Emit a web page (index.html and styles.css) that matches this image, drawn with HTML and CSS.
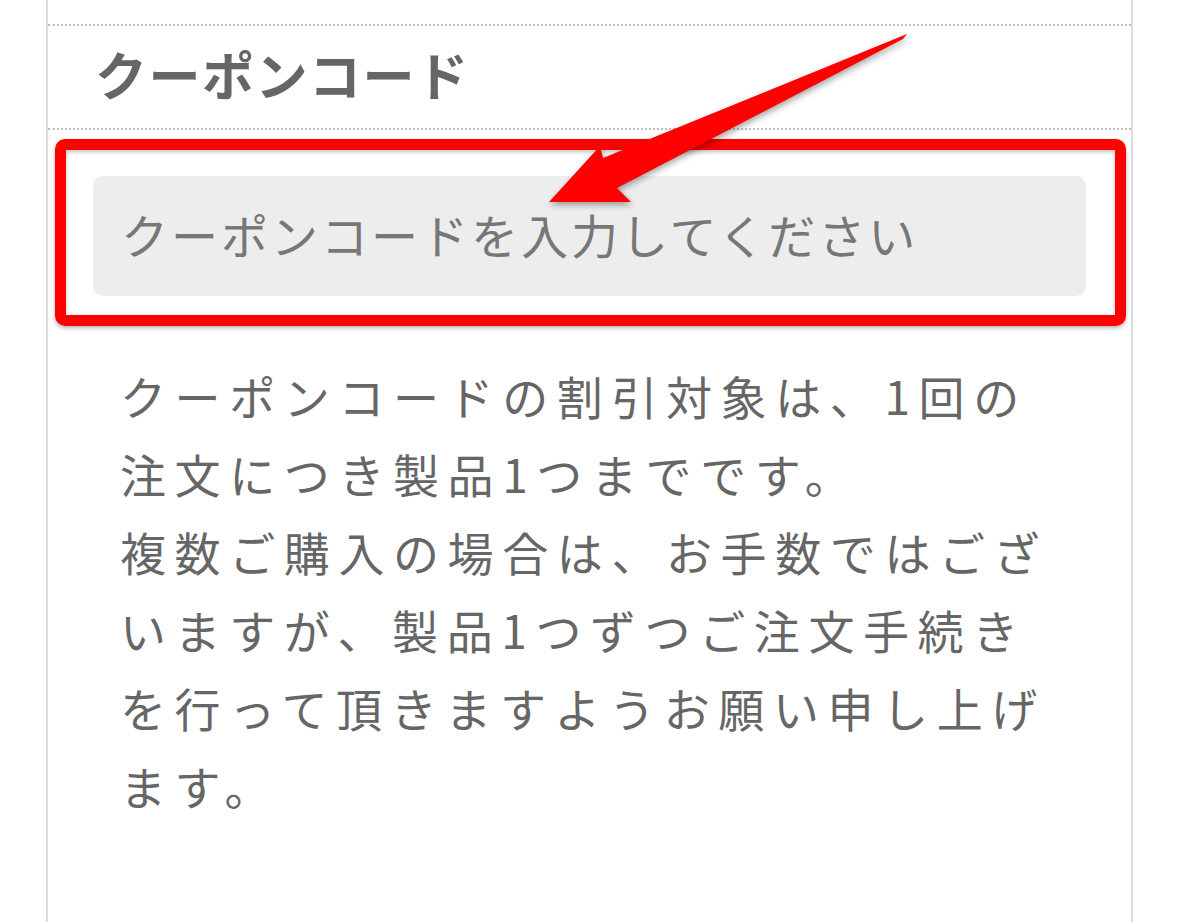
FILE: index.html
```html
<!DOCTYPE html>
<html lang="ja">
<head>
  <meta charset="UTF-8" />
  <meta name="viewport" content="width=device-width, initial-scale=1.0"/>
  <title>クーポンコード</title>
  <link rel="stylesheet" href="styles.css">
</head>
<body>
<div class="panel">
  <h2 class="section-title">クーポンコード</h2>

  <div class="coupon-field">
    <input type="text" class="coupon-input" placeholder="クーポンコードを入力してください" />
    <div class="highlight"></div>
  </div>

  <p class="note">
    クーポンコードの割引対象は、1回の注文につき製品1つまでです。<br/>
    複数ご購入の場合は、お手数ではございますが、製品1つずつご注文手続きを行って頂きますようお願い申し上げます。
  </p>
</div>

<!-- annotation arrow -->
<svg class="arrow" width="1179" height="922" viewBox="0 0 1179 922">
  <polygon points="907,34 603,158 600,146 549,202 631,202 617,188 903,39" fill="#ff0000"/>
</svg>
</body>
</html>
```

FILE: styles.css
```css
body {
  margin: 0;
  background: #fff;
  color: #666;
  font-family: "Noto Sans CJK JP", "Noto Sans", sans-serif;
  position: relative;
}

.panel {
  margin-left: 46px;
  width: 1083px;
  min-height: 898px;
  padding-top: 24px;
  border-left: 2px solid #dcdcdc;
  border-right: 2px solid #dcdcdc;
}

.section-title {
  margin: 0;
  padding-left: 47px;
  height: 102px;
  line-height: 96px;
  font-size: 52px;
  font-weight: bold;
  letter-spacing: 1.5px;
  color: #666;
  border-top: 2px dotted #bdbdbd;
  border-bottom: 2px dotted #bdbdbd;
}

.coupon-field {
  position: relative;
  padding: 46px 45px 0 45px;
}

.coupon-input {
  display: block;
  box-sizing: border-box;
  width: 100%;
  height: 120px;
  padding: 0 28px 6px;
  border: none;
  border-radius: 10px;
  background: #ededed;
  font-family: inherit;
  font-size: 47px;
  letter-spacing: 3px;
  color: #666;
  outline: none;
}

.coupon-input::placeholder {
  color: #777;
}

.highlight {
  position: absolute;
  left: 7px;
  top: 9px;
  width: 1071px;
  height: 187px;
  box-sizing: border-box;
  border: 11px solid #ff0000;
  border-radius: 10px;
  box-shadow: 0 2px 4px rgba(0,0,0,0.3), inset 0 2px 4px rgba(0,0,0,0.25);
  pointer-events: none;
}

.note {
  margin: 60px 0 0;
  padding: 0 70px 0 72px;
  font-size: 46px;
  letter-spacing: 8.6px;
  line-height: 78px;
  color: #666;
}

.arrow {
  position: absolute;
  left: 0;
  top: 0;
  pointer-events: none;
  filter: drop-shadow(1px 3px 3px rgba(0,0,0,0.35));
}
```
